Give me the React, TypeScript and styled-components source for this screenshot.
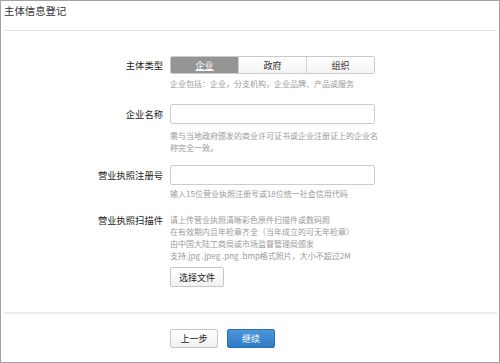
import styled, { createGlobalStyle } from "styled-components";
import { useState } from "react";

const GlobalStyle = createGlobalStyle`
  body {
    margin: 0;
    background-color: #fff;
    font-family: "Microsoft YaHei", "Noto Sans CJK SC", "Liberation Sans", sans-serif;
  }
  * {
    box-sizing: border-box;
  }
`;

const types = ["企业", "政府", "组织"];

const scanTips = [
  "请上传营业执照清晰彩色原件扫描件或数码照",
  "在有效期内且年检章齐全（当年成立的可无年检章）",
  "由中国大陆工商局或市场监督管理局颁发",
  "支持.jpg .jpeg .png .bmp格式照片，大小不超过2M",
];

const App = () => {
  const [active, setActive] = useState<number>(0);

  return (
    <Frame>
      <GlobalStyle />
      <Header>
        <Title>主体信息登记</Title>
      </Header>
      <Divider />
      <Form>
        <Row $center $gap={0}>
          <Label>主体类型</Label>
          <Field>
            <Segment>
              {types.map((t, i) => (
                <SegmentItem
                  key={t}
                  $active={i === active}
                  onClick={() => setActive(i)}
                >
                  {t}
                </SegmentItem>
              ))}
            </Segment>
          </Field>
        </Row>
        <Hint $top={4}>企业包括：企业，分支机构，企业品牌、产品或服务</Hint>

        <Row $center $gap={14}>
          <Label>企业名称</Label>
          <Field>
            <Input />
          </Field>
        </Row>
        <Hint $top={6}>
          需与当地政府颁发的商业许可证书或企业注册证上的企业名称完全一致。
        </Hint>

        <Row $center $gap={11}>
          <Label>营业执照注册号</Label>
          <Field>
            <Input />
          </Field>
        </Row>
        <Hint $top={3}>输入15位营业执照注册号或18位统一社会信用代码</Hint>

        <Row $gap={14}>
          <Label $lh={12}>营业执照扫描件</Label>
          <Field>
            {scanTips.map((line) => (
              <TipLine key={line}>{line}</TipLine>
            ))}
            <FileButton>选择文件</FileButton>
          </Field>
        </Row>
      </Form>
      <Divider $thick />
      <Footer>
        <GhostButton>上一步</GhostButton>
        <PrimaryButton>继续</PrimaryButton>
      </Footer>
    </Frame>
  );
};

const Frame = styled.div`
  width: 500px;
  height: 363px;
  border: 1px solid #a3a3a3;
  display: flex;
  flex-direction: column;
  overflow: hidden;
`;

const Header = styled.div`
  height: 29px;
  padding: 3px 0 0 3px;
`;

const Title = styled.h1`
  margin: 0;
  font-size: 10.4px;
  line-height: 14px;
  font-weight: normal;
  color: #333;
`;

const Divider = styled.div<{ $thick?: boolean }>`
  flex-shrink: 0;
  margin: 0 2px 0 3px;
  height: ${(p) => (p.$thick ? "2px" : "1px")};
  background-color: ${(p) => (p.$thick ? "#ececec" : "#e4e4e4")};
`;

const Form = styled.div`
  padding-top: 25px;
  height: 281px;
  flex-shrink: 0;
  display: flex;
  flex-direction: column;
`;

const Row = styled.div<{ $center?: boolean; $gap: number }>`
  display: grid;
  grid-template-columns: 162px 205px;
  column-gap: 7px;
  align-items: ${(p) => (p.$center ? "center" : "start")};
  margin-top: ${(p) => p.$gap}px;
`;

const Label = styled.label<{ $lh?: number }>`
  text-align: right;
  font-size: 9.3px;
  line-height: ${(p) => (p.$lh ? `${p.$lh}px` : "14px")};
  color: #222;
`;

const Field = styled.div`
  display: flex;
  flex-direction: column;
  align-items: flex-start;
`;

const Segment = styled.div`
  width: 205px;
  height: 18px;
  display: flex;
  border: 1px solid #cacaca;
  border-radius: 2px;
  overflow: hidden;
`;

const SegmentItem = styled.button<{ $active: boolean }>`
  flex: 1;
  border: none;
  border-left: 1px solid #cfcfcf;
  padding: 0;
  font-family: inherit;
  font-size: 9px;
  cursor: pointer;
  color: ${(p) => (p.$active ? "#fff" : "#333")};
  text-decoration: ${(p) => (p.$active ? "underline" : "none")};
  background: ${(p) =>
    p.$active ? "#959595" : "linear-gradient(#ffffff, #f4f4f4)"};

  &:first-child {
    border-left: none;
  }
`;

const Input = styled.input`
  width: 205px;
  height: 20px;
  border: 1px solid #cdcdcd;
  border-radius: 2px;
  padding: 0 4px;
  font-size: 9px;
  outline: none;
`;

const Hint = styled.div<{ $top: number }>`
  margin: ${(p) => p.$top}px 0 0 169px;
  width: 210px;
  font-size: 8px;
  line-height: 12px;
  color: #9a9a9a;
`;

const TipLine = styled.div`
  font-size: 8px;
  line-height: 12px;
  color: #9a9a9a;
  white-space: nowrap;
`;

const FileButton = styled.button`
  margin-top: 5px;
  width: 54px;
  height: 20px;
  padding: 0;
  border: 1px solid #c6c6c6;
  border-radius: 2px;
  background: linear-gradient(#ffffff, #f1f1f1);
  font-family: inherit;
  font-size: 9px;
  color: #222;
`;

const Footer = styled.div`
  display: flex;
  gap: 9px;
  padding: 15px 0 0 169px;
`;

const GhostButton = styled.button`
  width: 48px;
  height: 19px;
  padding: 0;
  border: 1px solid #c6c6c6;
  border-radius: 2px;
  background: linear-gradient(#ffffff, #f1f1f1);
  font-family: inherit;
  font-size: 9px;
  color: #222;
`;

const PrimaryButton = styled.button`
  width: 48px;
  height: 19px;
  padding: 0;
  border: 1px solid #2b6fb3;
  border-radius: 2px;
  background: linear-gradient(#4c97da, #2f7cc5);
  font-family: inherit;
  font-size: 9px;
  color: #fff;
`;

export default App;
